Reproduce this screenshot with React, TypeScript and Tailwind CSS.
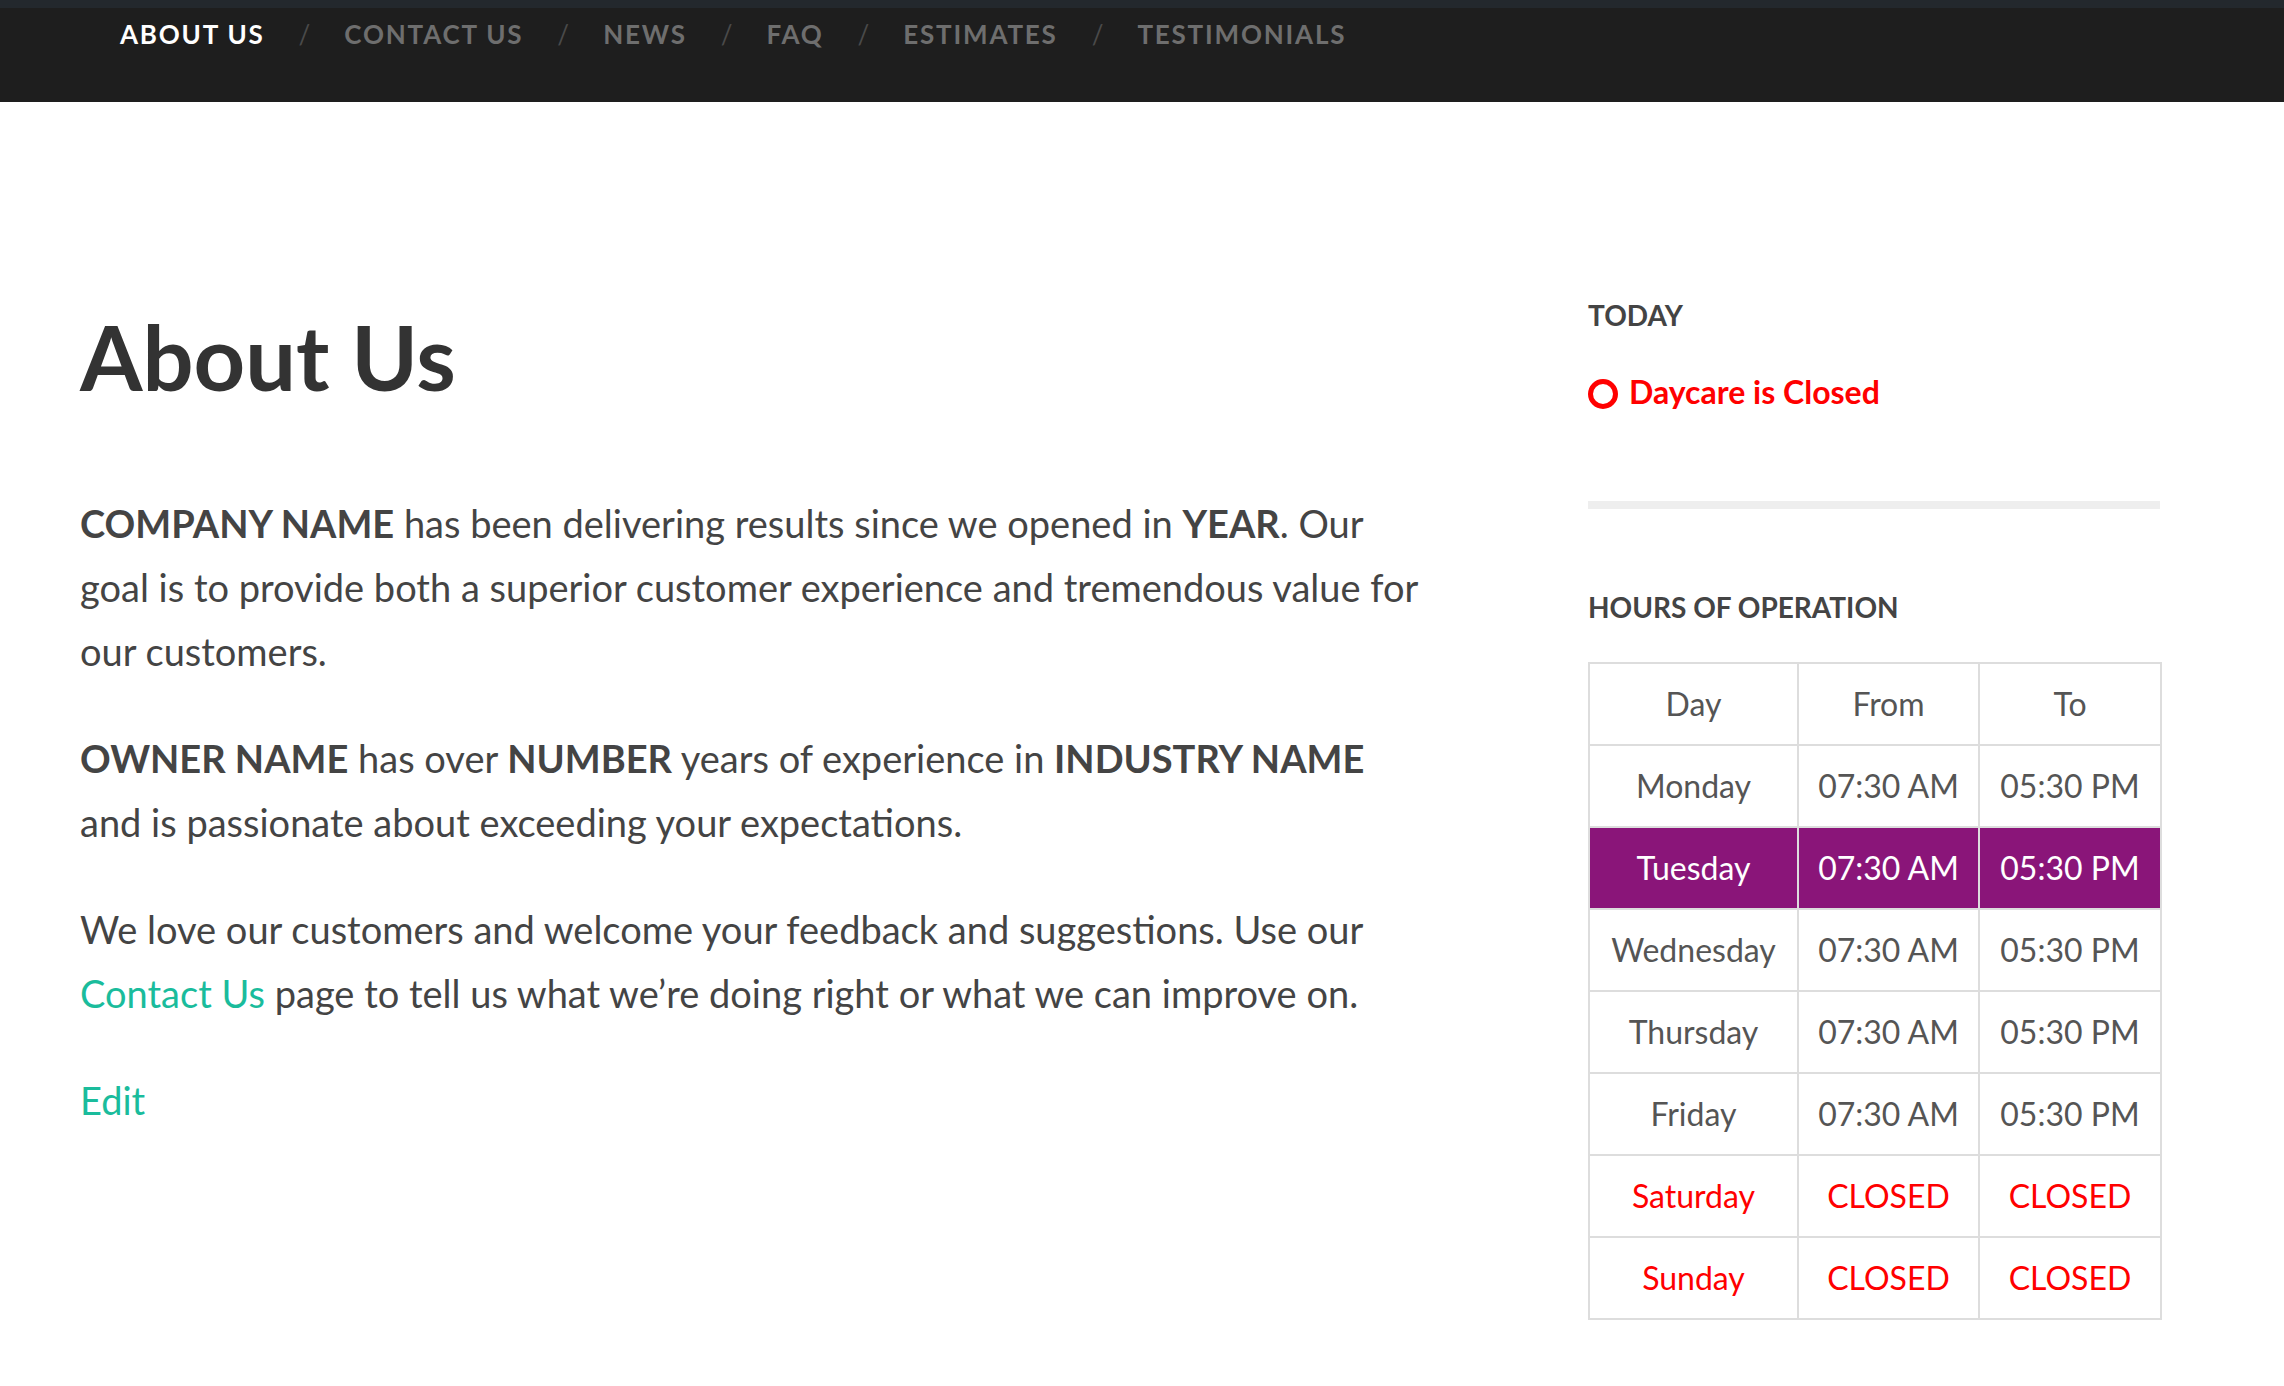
const navItems = ['About Us', 'Contact Us', 'News', 'FAQ', 'Estimates', 'Testimonials'];

const hours = [
  { day: 'Monday', from: '07:30 AM', to: '05:30 PM' },
  { day: 'Tuesday', from: '07:30 AM', to: '05:30 PM', today: true },
  { day: 'Wednesday', from: '07:30 AM', to: '05:30 PM' },
  { day: 'Thursday', from: '07:30 AM', to: '05:30 PM' },
  { day: 'Friday', from: '07:30 AM', to: '05:30 PM' },
  { day: 'Saturday', from: 'CLOSED', to: 'CLOSED', closed: true },
  { day: 'Sunday', from: 'CLOSED', to: 'CLOSED', closed: true },
];

export default function App() {
  return (
    <div className="min-h-screen bg-white font-['Lato',sans-serif] text-[#444]">
      {/* Top bar */}
      <div className="h-[8px] bg-[#23282d]" />
      <nav className="h-[94px] bg-[#1e1e1e] pl-[120px] pt-[13px]">
        <ul className="flex items-start gap-[34px] text-[26px] font-bold uppercase leading-none tracking-[1.8px]">
          {navItems.map((item, i) => (
            <li key={item} className="flex items-start gap-[34px]">
              {i > 0 && <span className="font-normal tracking-normal text-[#4a4a4a]">/</span>}
              <a className={i === 0 ? 'text-white' : 'text-[#6e6e6e]'}>{item}</a>
            </li>
          ))}
        </ul>
      </nav>

      <div className="flex px-[80px]">
        {/* Main content */}
        <main className="w-[1352px] shrink-0 pt-[209px]">
          <h1 className="text-[90px] font-bold leading-none text-[#333]">About Us</h1>
          <div className="mt-[90px] text-[38px] leading-[64px]">
            <p className="mb-[43px]">
              <strong>COMPANY NAME</strong> has been delivering results since we opened in <strong>YEAR</strong>. Our
              goal is to provide both a superior customer experience and tremendous value for our customers.
            </p>
            <p className="mb-[43px]">
              <strong>OWNER NAME</strong> has over <strong>NUMBER</strong> years of experience in{' '}
              <strong>INDUSTRY NAME</strong> and is passionate about exceeding your expectations.
            </p>
            <p className="mb-[43px]">
              We love our customers and welcome your feedback and suggestions. Use our{' '}
              <a className="text-[#1abc9c]">Contact Us</a> page to tell us what we’re doing right or what we can
              improve on.
            </p>
            <p>
              <a className="text-[#1abc9c]">Edit</a>
            </p>
          </div>
        </main>

        {/* Sidebar */}
        <aside className="ml-[156px] w-[572px] shrink-0 pt-[199px]">
          <h3 className="text-[28px] font-bold uppercase leading-none text-[#444]">Today</h3>
          <div className="mt-[47px] flex items-start gap-[11px] text-[32px] font-bold leading-none text-[#ff0000]">
            <span className="mt-[3px] h-[30px] w-[30px] rounded-full border-[5px] border-[#ff0000]" />
            <span>Daycare is Closed</span>
          </div>
          <div className="mt-[92px] h-[8px] bg-[#eeeeee]" />
          <h3 className="mt-[84px] text-[28px] font-bold uppercase leading-none text-[#444]">Hours of Operation</h3>
          <table className="mt-[41px] w-[572px] table-fixed border-collapse text-center text-[32px] text-[#555]">
            <colgroup>
              <col className="w-[209px]" />
              <col className="w-[181px]" />
              <col className="w-[182px]" />
            </colgroup>
            <thead>
              <tr>
                {['Day', 'From', 'To'].map((h) => (
                  <th key={h} className="h-[82px] border-2 border-[#dddddd] font-normal">
                    {h}
                  </th>
                ))}
              </tr>
            </thead>
            <tbody>
              {hours.map((r) => (
                <tr
                  key={r.day}
                  className={r.today ? 'bg-[#8a1579] text-white' : r.closed ? 'text-[#ff0000]' : ''}
                >
                  <td className="h-[82px] border-2 border-[#dddddd]">{r.day}</td>
                  <td className="h-[82px] border-2 border-[#dddddd]">{r.from}</td>
                  <td className="h-[82px] border-2 border-[#dddddd]">{r.to}</td>
                </tr>
              ))}
            </tbody>
          </table>
        </aside>
      </div>
    </div>
  );
}
